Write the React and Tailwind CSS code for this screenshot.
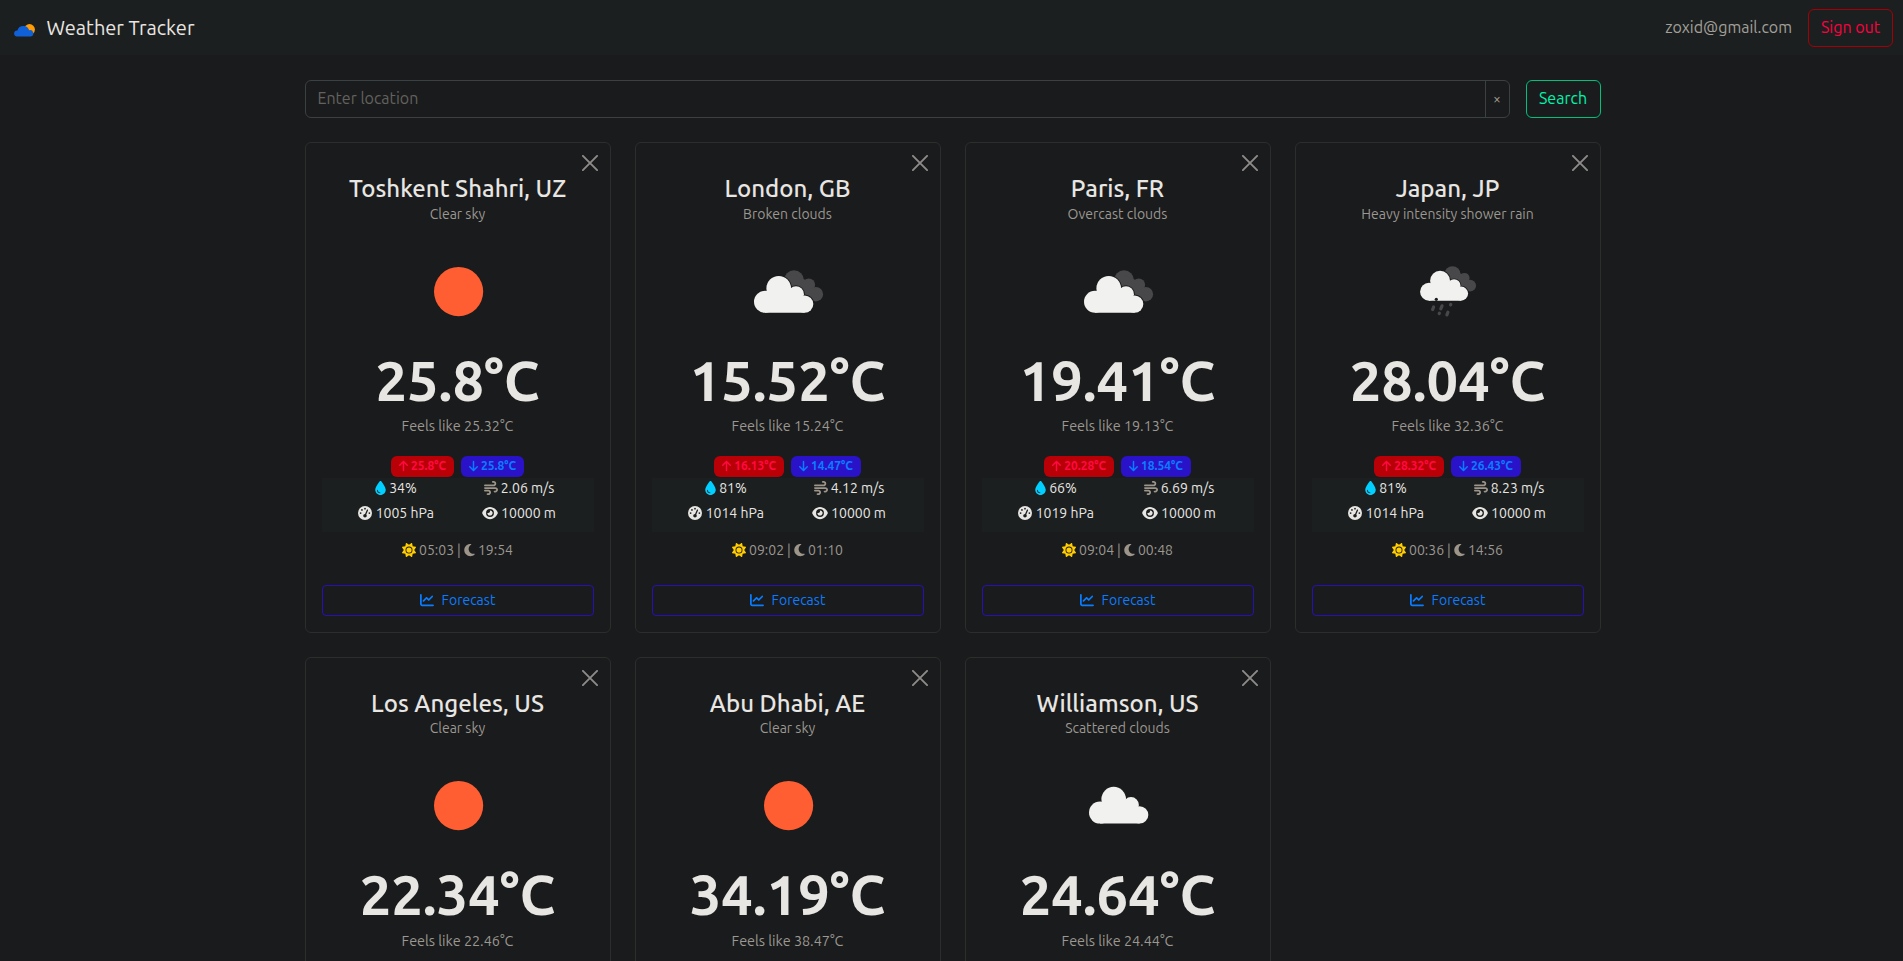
import React from "react";
import {
  FaArrowUp,
  FaArrowDown,
  FaDroplet,
  FaWind,
  FaGaugeHigh,
  FaEye,
  FaSun,
  FaMoon,
  FaChartLine,
} from "react-icons/fa6";

const cards = [
  { city: "Toshkent Shahri, UZ", sky: "Clear sky", icon: "sun", temp: "25.8", feels: "25.32", details: { max: "25.8", min: "25.8", hum: 34, wind: "2.06", hpa: 1005, rise: "05:03", set: "19:54" } },
  { city: "London, GB", sky: "Broken clouds", icon: "clouds", temp: "15.52", feels: "15.24", details: { max: "16.13", min: "14.47", hum: 81, wind: "4.12", hpa: 1014, rise: "09:02", set: "01:10" } },
  { city: "Paris, FR", sky: "Overcast clouds", icon: "clouds", temp: "19.41", feels: "19.13", details: { max: "20.28", min: "18.54", hum: 66, wind: "6.69", hpa: 1019, rise: "09:04", set: "00:48" } },
  { city: "Japan, JP", sky: "Heavy intensity shower rain", icon: "rain", temp: "28.04", feels: "32.36", details: { max: "28.32", min: "26.43", hum: 81, wind: "8.23", hpa: 1014, rise: "00:36", set: "14:56" } },
  { city: "Los Angeles, US", sky: "Clear sky", icon: "sun", temp: "22.34", feels: "22.46" },
  { city: "Abu Dhabi, AE", sky: "Clear sky", icon: "sun", temp: "34.19", feels: "38.47" },
  { city: "Williamson, US", sky: "Scattered clouds", icon: "cloud", temp: "24.64", feels: "24.44" },
];

function CloudShape() {
  return (
    <>
      <circle cx="27" cy="60.8" r="11" />
      <circle cx="40.7" cy="47.3" r="12.3" />
      <circle cx="58" cy="53.2" r="7.9" />
      <circle cx="66.6" cy="63.1" r="8.7" />
      <path d="M27 71.8 L27 52 L40 46 L58 50 L66.6 58 L66.6 71.8 Z" />
    </>
  );
}

function FrontCloud() {
  return (
    <g fill="#f1f1ef">
      <CloudShape />
    </g>
  );
}

function BackCloud() {
  return (
    <>
      <g fill="#48484a">
        <circle cx="56" cy="39.2" r="10" />
        <circle cx="70.8" cy="43.8" r="6.3" />
        <circle cx="77.8" cy="53.2" r="7.3" />
        <path d="M56 34 L70 40 L76 52 L66 58 L50 46 Z" />
      </g>
      <g fill="#1a1b1c" stroke="#1a1b1c" strokeWidth="2">
        <CloudShape />
      </g>
    </>
  );
}

function WeatherIcon({ type }) {
  return (
    <svg viewBox="0 0 100 100" className="h-[100px] w-[100px]">
      {type === "sun" && <circle cx="50.6" cy="50.6" r="24.6" fill="#ff5e32" />}
      {type === "cloud" && (
        <g transform="translate(5 -3.2)">
          <FrontCloud />
        </g>
      )}
      {type === "clouds" && (
        <g>
          <BackCloud />
          <FrontCloud />
        </g>
      )}
      {type === "rain" && (
        <g>
          <g transform="translate(9.1 1.5) scale(0.81)">
            <BackCloud />
            <FrontCloud />
          </g>
          <circle cx="38.3" cy="58.3" r="1.6" fill="#1a1b1c" />
          <g stroke="#48484a" strokeWidth="3.2" strokeLinecap="round">
            <path d="M35.6 66 L34.6 68.6" />
            <path d="M44 64.8 L42.8 67.8" />
            <path d="M52.8 63.4 L52.6 63.9" />
            <path d="M41.4 72.1 L41.2 72.5" />
            <path d="M49.9 71.2 L48.9 73.9" />
          </g>
        </g>
      )}
    </svg>
  );
}

function Details({ d }) {
  return (
    <>
      <div className="mt-[19px] flex h-[21px] gap-[7px] text-[12px] font-bold">
        <span className="flex items-center gap-[3px] rounded-md bg-[#b90007] px-[7.9px] text-[#ff0a40]">
          <FaArrowUp className="h-3 w-[9px]" />
          {d.max}°C
        </span>
        <span className="flex items-center gap-[3px] rounded-md bg-[#2a12c9] px-[7.9px] text-[#0a7cff]">
          <FaArrowDown className="h-3 w-[9px]" />
          {d.min}°C
        </span>
      </div>
      <div className="mt-px grid h-[54px] w-full grid-cols-[149px_97px] content-start justify-start bg-[#1b1f1f] text-[14px] leading-[21px] text-[#e8e6e3]">
        <span className="flex h-[21px] items-center justify-center gap-[3px]">
          <FaDroplet className="h-[14px] w-[11px] text-[#00cfff]" />
          {d.hum}%
        </span>
        <span className="flex h-[21px] items-center justify-center gap-[3px]">
          <FaWind className="h-[14px] w-[14px] text-[#9d9589]" />
          {d.wind} m/s
        </span>
        <span className="mt-1 flex h-[21px] items-center justify-center gap-[3.5px]">
          <FaGaugeHigh className="h-[14px] w-[14px]" />
          {d.hpa} hPa
        </span>
        <span className="mt-1 flex h-[21px] items-center justify-center gap-[3px]">
          <FaEye className="h-[14px] w-[16px]" />
          10000 m
        </span>
      </div>
      <div className="mt-2 flex h-[21px] items-center gap-[3px] text-[14px] text-[#9b9791]">
        <FaSun className="h-[14px] w-[14px] text-[#ffcd00]" />
        <span>{d.rise}</span>
        <span>|</span>
        <FaMoon className="h-[14px] w-[11px] text-[#9d9589]" />
        <span>{d.set}</span>
      </div>
      <button className="mt-[24px] flex h-[31px] w-full items-center justify-center gap-2 rounded-[4px] border border-[#2710b4] text-[14px] text-[#0a7cff]">
        <FaChartLine className="h-[14px] w-[14px]" />
        Forecast
      </button>
    </>
  );
}

function Card({ c }) {
  return (
    <article className="relative flex h-[490.6px] flex-col items-center rounded-md border border-[#2c2e2b] px-4 pt-[31px]">
      <button className="absolute top-3 right-3 text-[#8d8b89]" aria-label="Remove">
        <svg viewBox="0 0 16 16" className="h-4 w-4" stroke="currentColor" strokeWidth="1.9" strokeLinecap="round">
          <path d="M0.9 0.9 L15.1 15.1 M15.1 0.9 L0.9 15.1" />
        </svg>
      </button>
      <h5 className="h-[28.8px] pt-px text-[24px] leading-[28.8px] font-medium whitespace-nowrap text-[#e8e6e3]">{c.city}</h5>
      <p className="mt-px h-[21px] text-[14px] leading-[21px] whitespace-nowrap text-[#9b9791]">{c.sky}</p>
      <div className="mt-[16px] h-[100px]">
        <WeatherIcon type={c.icon} />
      </div>
      <div className="mt-[6px] h-[67.2px] text-[56px] leading-[67.2px] font-semibold whitespace-nowrap text-[#e8e6e3]">{c.temp}°C</div>
      <p className="mt-[2px] h-[21px] text-[14.4px] leading-[21px] text-[#9b9791]">Feels like {c.feels}°C</p>
      {c.details && <Details d={c.details} />}
    </article>
  );
}

export default function App() {
  return (
    <div className="h-[961px] w-full overflow-hidden bg-[#1a1b1c] font-['Ubuntu','Noto_Sans',sans-serif]">
      <nav className="flex h-[55px] items-center justify-between bg-[#1c1f1f] pr-[10px] pl-[14px]">
        <div className="flex items-center text-[20px] text-[#e8e6e3]">
          <svg viewBox="0 0 21 13" className="mt-[5px] mr-[11.5px] h-[13px] w-[21px]">
            <circle cx="15.5" cy="5.5" r="5.4" fill="#ff9c07" />
            <path d="M3 12.5 A3 3 0 0 1 3.4 6.4 A6.2 6.2 0 0 1 15.2 6.3 A3.2 3.2 0 0 1 17 12.5 Z" fill="#1060d8" />
          </svg>
          Weather Tracker
        </div>
        <div className="flex items-center gap-4 text-[16px]">
          <span className="pb-[2px] text-[#a3a09b]">zoxid@gmail.com</span>
          <button className="flex h-[38px] w-[85px] items-center justify-center rounded-md border border-[#a50007] pb-[2px] text-[#ff0040]">Sign out</button>
        </div>
      </nav>
      <main className="w-[1600.5px] pt-[25px] pl-[304.5px]">
        <div className="flex h-[38px] gap-4 text-[16px]">
          <div className="flex flex-1 rounded-md border border-[#3b4042]">
            <span className="flex flex-1 items-center px-3 pb-[2px] text-[#62625f]">Enter location</span>
            <button className="flex w-[24px] items-center justify-center border-l border-[#3b4042] text-[14px] text-[#a8a095]">×</button>
          </div>
          <button className="flex w-[75px] items-center justify-center rounded-md border border-[#00c07b] pb-[2px] text-[#00f5ac]">Search</button>
        </div>
        <div className="mt-6 grid grid-cols-4 gap-6">
          {cards.map((c) => (
            <Card key={c.city} c={c} />
          ))}
        </div>
      </main>
    </div>
  );
}
